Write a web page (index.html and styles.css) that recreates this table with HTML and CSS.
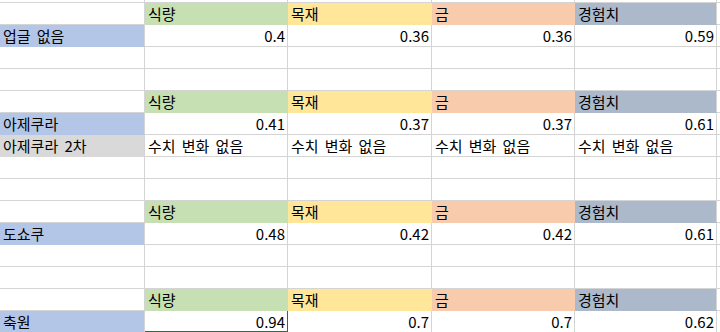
FILE: index.html
```html
<!DOCTYPE html>
<html lang="ko">
<head>
<meta charset="utf-8">
<link rel="stylesheet" href="styles.css">
</head>
<body>
<div class="sheet">
  <!-- row 0 (partial) -->
  <div class="c"></div><div class="c"></div><div class="c"></div><div class="c"></div><div class="c"></div><div class="c"></div>
  <!-- header -->
  <div class="c"></div><div class="c h g">식량</div><div class="c h y">목재</div><div class="c h o">금</div><div class="c h b">경험치</div><div class="c"></div>
  <div class="c lab">업글 없음</div><div class="c n">0.4</div><div class="c n">0.36</div><div class="c n">0.36</div><div class="c n">0.59</div><div class="c"></div>
  <div class="c"></div><div class="c"></div><div class="c"></div><div class="c"></div><div class="c"></div><div class="c"></div>
  <div class="c"></div><div class="c"></div><div class="c"></div><div class="c"></div><div class="c"></div><div class="c"></div>
  <!-- header -->
  <div class="c"></div><div class="c h g">식량</div><div class="c h y">목재</div><div class="c h o">금</div><div class="c h b">경험치</div><div class="c"></div>
  <div class="c lab">아제쿠라</div><div class="c n">0.41</div><div class="c n">0.37</div><div class="c n">0.37</div><div class="c n">0.61</div><div class="c"></div>
  <div class="c lab gray">아제쿠라 2차</div><div class="c">수치 변화 없음</div><div class="c">수치 변화 없음</div><div class="c">수치 변화 없음</div><div class="c">수치 변화 없음</div><div class="c"></div>
  <div class="c"></div><div class="c"></div><div class="c"></div><div class="c"></div><div class="c"></div><div class="c"></div>
  <div class="c"></div><div class="c"></div><div class="c"></div><div class="c"></div><div class="c"></div><div class="c"></div>
  <!-- header -->
  <div class="c"></div><div class="c h g">식량</div><div class="c h y">목재</div><div class="c h o">금</div><div class="c h b">경험치</div><div class="c"></div>
  <div class="c lab">도쇼쿠</div><div class="c n">0.48</div><div class="c n">0.42</div><div class="c n">0.42</div><div class="c n">0.61</div><div class="c"></div>
  <div class="c"></div><div class="c"></div><div class="c"></div><div class="c"></div><div class="c"></div><div class="c"></div>
  <div class="c"></div><div class="c"></div><div class="c"></div><div class="c"></div><div class="c"></div><div class="c"></div>
  <!-- header -->
  <div class="c"></div><div class="c h g">식량</div><div class="c h y">목재</div><div class="c h o">금</div><div class="c h b">경험치</div><div class="c"></div>
  <div class="c lab">축원</div><div class="c n sel">0.94</div><div class="c n">0.7</div><div class="c n">0.7</div><div class="c n">0.62</div><div class="c"></div>
</div>
</body>
</html>
```

FILE: styles.css
```css
html, body {
  margin: 0;
  padding: 0;
  background: #fff;
  overflow: hidden;
}
.sheet {
  display: grid;
  grid-template-columns: 145px 143px 144px 143px 142px 1fr;
  grid-template-rows: 3px repeat(15, 22px);
  width: 720px;
  font-family: "Noto Sans CJK KR", "Noto Sans", sans-serif;
  font-size: 15px;
  word-spacing: 2px;
  color: #000;
}
.c {
  box-sizing: border-box;
  border-right: 1px solid #d4d4d4;
  border-bottom: 1px solid #d4d4d4;
  padding: 0 2px 0 3px;
  line-height: 21px;
  white-space: nowrap;
  overflow: hidden;
}
.n {
  text-align: right;
}
.h {
  border-right-color: transparent;
  border-bottom-color: transparent;
}
.g { background: #c6e0b4; }
.y { background: #ffe699; }
.o { background: #f8cbad; }
.b { background: #acb9ca; border-right-color: #d4d4d4; }
.lab {
  background: #b4c6e7;
  border-bottom-color: transparent;
}
.lab.gray {
  background: #d9d9d9;
}
.sel {
  border-bottom: 2px solid #217346;
  border-right-color: #217346;
}
```
